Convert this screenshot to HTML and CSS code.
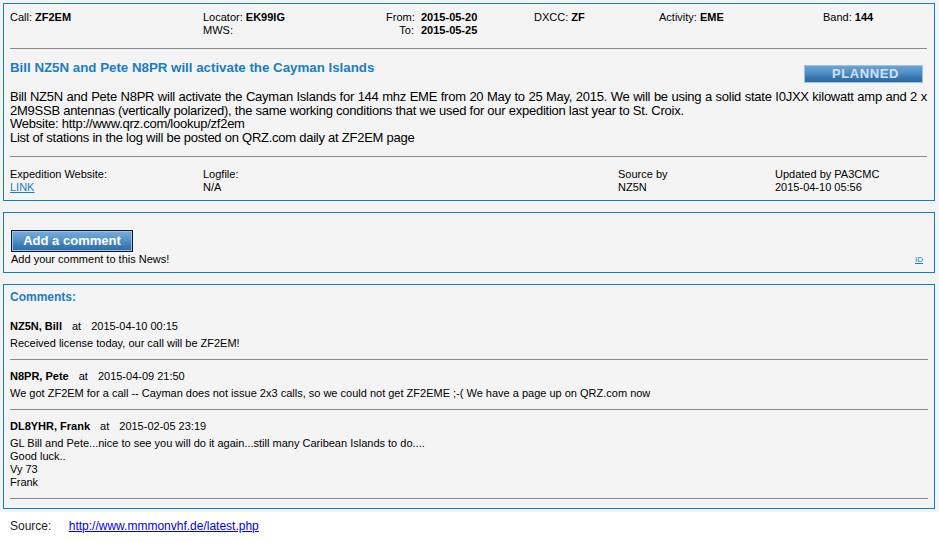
FILE: index.html
```html
<!DOCTYPE html>
<html lang="en">
<head>
    <meta charset="UTF-8">
    <title>ZF2EM - Cayman Islands</title>
    <link rel="stylesheet" href="styles.css">
</head>
<body>
    <div class="page">
        <!-- news item -->
        <div class="box news">
            <div class="info">
                <div class="cell">Call: <b>ZF2EM</b></div>
                <div class="cell">Locator: <b>EK99IG</b><br>MWS:</div>
                <div class="cell dates">
                    <span class="lbl">From:</span><b>2015-05-20</b>
                    <span class="lbl">To:</span><b>2015-05-25</b>
                </div>
                <div class="cell">DXCC: <b>ZF</b></div>
                <div class="cell">Activity: <b>EME</b></div>
                <div class="cell">Band: <b>144</b></div>
            </div>

            <div class="sep"></div>

            <div class="title-row">
                <h1>Bill NZ5N and Pete N8PR will activate the Cayman Islands</h1>
                <div class="badge">PLANNED</div>
            </div>

            <p class="text">Bill NZ5N and Pete N8PR will activate the Cayman Islands for 144 mhz EME from 20 May to 25 May, 2015. We will be using a solid state I0JXX kilowatt amp and 2 x 2M9SSB antennas (vertically polarized), the same working conditions that we used for our expedition last year to St. Croix.<br>Website: http://www.qrz.com/lookup/zf2em<br>List of stations in the log will be posted on QRZ.com daily at ZF2EM page</p>

            <div class="sep"></div>

            <div class="meta">
                <div class="cell">Expedition Website:<br><a href="#" class="blue">LINK</a></div>
                <div class="cell">Logfile:<br>N/A</div>
                <div class="cell">Source by<br>NZ5N</div>
                <div class="cell">Updated by PA3CMC<br>2015-04-10 05:56</div>
            </div>
        </div>

        <!-- add comment -->
        <div class="box add">
            <button class="btn">Add a comment</button>
            <div class="add-row">
                <span>Add your comment to this News!</span>
                <a href="#" class="blue tiny">ID</a>
            </div>
        </div>

        <!-- comments -->
        <div class="box comments">
            <h2>Comments:</h2>

            <div class="comment">
                <div class="who"><b>NZ5N, Bill</b><span class="at">at</span>2015-04-10 00:15</div>
                <div class="msg">Received license today, our call will be ZF2EM!</div>
            </div>

            <div class="comment">
                <div class="who"><b>N8PR, Pete</b><span class="at">at</span>2015-04-09 21:50</div>
                <div class="msg">We got ZF2EM for a call -- Cayman does not issue 2x3 calls, so we could not get ZF2EME ;-( We have a page up on QRZ.com now</div>
            </div>

            <div class="comment">
                <div class="who"><b>DL8YHR, Frank</b><span class="at">at</span>2015-02-05 23:19</div>
                <div class="msg">GL Bill and Pete...nice to see you will do it again...still many Caribean Islands to do....<br>Good luck..<br>Vy 73<br>Frank</div>
            </div>
        </div>
    </div>

    <div class="source">
        <span>Source:</span>
        <a href="#">http://www.mmmonvhf.de/latest.php</a>
    </div>
</body>
</html>
```

FILE: styles.css
```css
* {
    margin: 0;
    padding: 0;
    box-sizing: border-box;
}

body {
    font-family: "Liberation Sans", Arial, sans-serif;
    background: #fff;
    color: #000;
}

.page {
    background: #f4f4f4;
    padding: 3px 4px 3px 3px;
    display: flex;
    flex-direction: column;
    gap: 10px;
}

.box {
    border: 1px solid #127ec6;
    background: #f4f4f4;
}

.news {
    padding: 7px 7px 6px 6px;
    font-size: 11px;
    line-height: 13px;
}

.info {
    display: grid;
    grid-template-columns: 193px 183px 148px 125px 164px auto;
    margin-bottom: 11px;
}

.dates {
    display: grid;
    grid-template-columns: 28px auto;
    column-gap: 7px;
    align-content: start;
}

.dates .lbl {
    text-align: right;
}

.sep {
    border-top: 1px solid #8a8a8a;
}

.title-row {
    display: flex;
    justify-content: space-between;
    align-items: flex-start;
    margin-top: 11px;
}

h1 {
    font-size: 13.3px;
    line-height: 16px;
    color: #1b7dc3;
}

.badge {
    margin-top: 5px;
    margin-right: 4px;
    width: 119px;
    height: 18px;
    border: 1px solid #9cc3e3;
    background: linear-gradient(to bottom, #6aa4d2 0%, #4f8ec4 45%, #3878b0 70%, #2c6aa2 100%);
    color: #d2e1fb;
    font-weight: bold;
    font-size: 13px;
    line-height: 16px;
    letter-spacing: 0.6px;
    text-align: right;
    padding-right: 23px;
}

.text {
    margin: 7px 0 12px;
    font-size: 13px;
    line-height: 13.5px;
    letter-spacing: -0.25px;
    text-align: justify;
}

.meta {
    display: grid;
    grid-template-columns: 193px 415px 157px auto;
    padding-top: 11px;
}

.blue {
    color: #1b7dc3;
}

.add {
    padding: 17px 11px 6px 7px;
    font-size: 11px;
    line-height: 13px;
    margin-top: 1px;
}

.btn {
    display: block;
    width: 122px;
    height: 22px;
    border: 1px solid #0c1446;
    box-shadow: inset 0 0 0 1px #9fc2e0;
    background: linear-gradient(to bottom, #78afd9 0%, #5592c6 45%, #3a7ab2 75%, #2c6aa2 100%);
    color: #fff;
    font-family: "Liberation Sans", Arial, sans-serif;
    font-weight: bold;
    font-size: 13px;
    line-height: 18px;
    cursor: pointer;
}

.add-row {
    display: flex;
    justify-content: space-between;
    align-items: flex-end;
    margin-top: 1px;
}

.tiny {
    font-size: 8px;
    line-height: 10px;
    margin-bottom: 1px;
}

.comments {
    padding: 5px 6px 9px 6px;
    font-size: 11px;
    line-height: 13px;
    margin-top: 1px;
}

h2 {
    font-size: 12px;
    line-height: 14px;
    color: #1b7dc3;
    margin-bottom: 6px;
}

.comment {
    padding: 10px 0 9px;
    border-bottom: 1px solid #8a8a8a;
}

.who {
    margin-bottom: 4px;
}

.at {
    margin: 0 10px;
}

.source {
    padding: 7px 10px 5px;
    font-size: 12px;
    line-height: 14px;
    color: #222;
}

.source a {
    color: #0000ee;
    margin-left: 14px;
}
```
